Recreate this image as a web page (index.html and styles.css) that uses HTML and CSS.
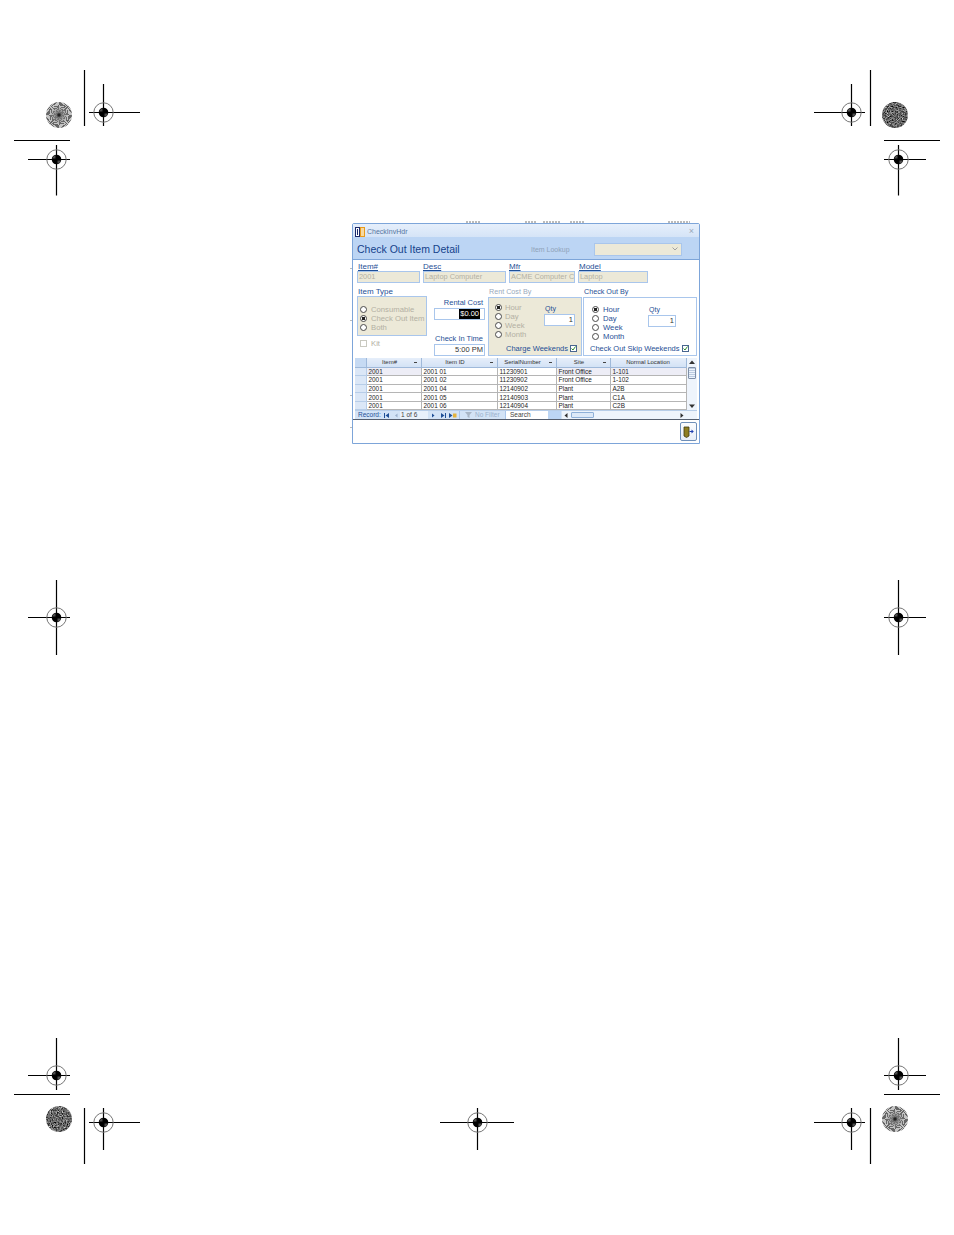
FILE: index.html
```html
<!DOCTYPE html>
<html lang="en">
<head>
<meta charset="utf-8">
<title>Check Out Item Detail</title>
<link rel="stylesheet" href="styles.css">
</head>
<body>
<main class="page">
  <svg class="marks" width="954" height="1235" viewBox="0 0 954 1235" aria-hidden="true">
    <defs>
      <g id="reg">
        <circle r="9.700" fill="none" stroke="#777" stroke-width="1"/>
        <circle r="4.800" fill="#000"/>
        <path d="M-1 -4.300A4.500 4.500 0 0 0 -4.300 -1H-1ZM1 1V4.300A4.500 4.500 0 0 0 4.300 1Z" fill="#fff" opacity="0.3"/>
      </g>
      <filter id="noise" x="0" y="0" width="100%" height="100%" color-interpolation-filters="sRGB">
        <feTurbulence type="fractalNoise" baseFrequency="0.8" numOctaves="2" seed="4"/>
        <feColorMatrix type="matrix" values="0.9 0.9 0 0 -0.5  0.9 0.9 0 0 -0.5  0.9 0.9 0 0 -0.5  0 0 0 0 1"/>
        <feComposite in2="SourceGraphic" operator="in"/>
      </filter>
    </defs>
    <g class="ink">
      <path d="M89 112.500H140M103.500 84V126M84.500 70V126M14 140.500H70M28 159.500H70M56.500 145V195.500"/>
      <path d="M814 112.500H865M851.500 84V126M870.500 70V126M884 140.500H940M884 159.500H926M898.500 145V195.500"/>
      <path d="M28 617.500H70M56.500 580V655M884 617.500H926M898.500 580V655"/>
      <path d="M28 1075.500H70M56.500 1038V1090M14 1094.500H70M89 1122.500H140M103.500 1108V1150M84.500 1108V1164"/>
      <path d="M884 1075.500H926M898.500 1038V1090M884 1094.500H940M814 1122.500H865M851.500 1108V1150M870.500 1108V1164"/>
      <path d="M440 1122.500H514M477.500 1108V1150"/>
    </g>
    <use href="#reg" x="103.500" y="112.500"/>
    <use href="#reg" x="56.500" y="159.500"/>
    <use href="#reg" x="851.500" y="112.500"/>
    <use href="#reg" x="898.500" y="159.500"/>
    <use href="#reg" x="56.500" y="617.500"/>
    <use href="#reg" x="898.500" y="617.500"/>
    <use href="#reg" x="56.500" y="1075.500"/>
    <use href="#reg" x="103.500" y="1122.500"/>
    <use href="#reg" x="898.500" y="1075.500"/>
    <use href="#reg" x="851.500" y="1122.500"/>
    <use href="#reg" x="477.500" y="1122.500"/>
    <circle cx="895" cy="115" r="13" fill="#666" filter="url(#noise)"/>
    <circle cx="59" cy="1119" r="13" fill="#666" filter="url(#noise)"/>
    <g class="specks">
      <path d="M466 222H480M525 222H537M543 222H560M570 222H585M668 222H690M351 268V269M351 320V321M351 395V396M351 427V428"/>
    </g>
  </svg>

  <div class="disc burst disc-tl"></div>
  <div class="disc burst disc-br"></div>

  <section class="window">
    <div class="titlebar">
      <svg class="app-icon" width="10" height="10" viewBox="0 0 10 10" aria-hidden="true">
        <rect x="0.500" y="0.500" width="4" height="9" fill="#fff" stroke="#1b2a6b"/>
        <rect x="2" y="2" width="1" height="6" fill="#1b2a6b"/>
        <rect x="5.500" y="0.500" width="4" height="9" fill="#f7d9a0" stroke="#e89a1c"/>
      </svg>
      <span class="title-text">CheckInvHdr</span>
      <span class="close">×</span>
    </div>
    <header class="band">
      <h1>Check Out Item Detail</h1>
      <span class="lookup-label">Item Lookup</span>
      <div class="lookup">
        <svg width="6" height="4" viewBox="0 0 6 4" aria-hidden="true"><path d="M0.500 0.500L3 3L5.500 0.500" fill="none" stroke="#a0a0a0"/></svg>
      </div>
    </header>

    <div class="body">
      <div class="fields">
        <div class="field f-item"><label>Item#</label><div class="input off">2001</div></div>
        <div class="field f-desc"><label>Desc</label><div class="input off">Laptop Computer</div></div>
        <div class="field f-mfr"><label>Mfr</label><div class="input off">ACME Computer C</div></div>
        <div class="field f-model"><label>Model</label><div class="input off">Laptop</div></div>
      </div>

      <div class="columns">
        <div class="col col-type">
          <div class="col-title">Item Type</div>
          <div class="box type-box">
            <div class="opt off-text"><i class="radio"></i>Consumable</div>
            <div class="opt off-text"><i class="radio on"></i>Check Out Item</div>
            <div class="opt off-text"><i class="radio"></i>Both</div>
          </div>
          <div class="kit off-text"><i class="check"></i>Kit</div>
        </div>

        <div class="col col-cost">
          <div class="cost-label">Rental Cost</div>
          <div class="input live right"><span class="selected">$0.00</span></div>
          <div class="cost-label second">Check In Time</div>
          <div class="input live right">5:00 PM</div>
        </div>

        <div class="col col-rent">
          <div class="col-title muted">Rent Cost By</div>
          <div class="box rent-box">
            <div class="by-row">
              <div class="opts">
                <div class="opt off-text"><i class="radio on"></i>Hour</div>
                <div class="opt off-text"><i class="radio"></i>Day</div>
                <div class="opt off-text"><i class="radio"></i>Week</div>
                <div class="opt off-text"><i class="radio"></i>Month</div>
              </div>
              <div class="qty"><div class="qty-label">Qty</div><div class="input live right">1</div></div>
            </div>
            <div class="weekend">Charge Weekends<i class="check ticked"><svg width="7" height="7" viewBox="0 0 7 7" aria-hidden="true"><path d="M1.500 3.500L3 5L5.500 1.500" fill="none" stroke="#2e8b2e"/></svg></i></div>
          </div>
        </div>

        <div class="col col-out">
          <div class="col-title">Check Out By</div>
          <div class="box out-box">
            <div class="by-row">
              <div class="opts">
                <div class="opt"><i class="radio on"></i>Hour</div>
                <div class="opt"><i class="radio"></i>Day</div>
                <div class="opt"><i class="radio"></i>Week</div>
                <div class="opt"><i class="radio"></i>Month</div>
              </div>
              <div class="qty"><div class="qty-label">Qty</div><div class="input live right">1</div></div>
            </div>
            <div class="weekend">Check Out Skip Weekends<i class="check ticked"><svg width="7" height="7" viewBox="0 0 7 7" aria-hidden="true"><path d="M1.500 3.500L3 5L5.500 1.500" fill="none" stroke="#2e8b2e"/></svg></i></div>
          </div>
        </div>
      </div>

      <div class="sheet">
        <div class="sheet-main">
          <table>
            <colgroup>
              <col class="c-sel"><col class="c-item"><col class="c-id"><col class="c-serial"><col class="c-site"><col class="c-loc">
            </colgroup>
            <thead>
              <tr><th class="corner"></th><th class="sorted">Item#<b></b></th><th class="sorted">Item ID<b></b></th><th class="sorted">SerialNumber<b></b></th><th class="sorted">Site<b></b></th><th>Normal Location</th></tr>
            </thead>
            <tbody>
              <tr class="current"><td class="sel"></td><td>2001</td><td class="plain">2001 01</td><td class="plain">11230901</td><td>Front Office</td><td>1-101</td></tr>
              <tr><td class="sel"></td><td>2001</td><td>2001 02</td><td>11230902</td><td>Front Office</td><td>1-102</td></tr>
              <tr><td class="sel"></td><td>2001</td><td>2001 04</td><td>12140902</td><td>Plant</td><td>A2B</td></tr>
              <tr><td class="sel"></td><td>2001</td><td>2001 05</td><td>12140903</td><td>Plant</td><td>C1A</td></tr>
              <tr><td class="sel"></td><td>2001</td><td>2001 06</td><td>12140904</td><td>Plant</td><td>C2B</td></tr>
            </tbody>
          </table>
          <div class="vscroll">
            <svg class="tri" width="6" height="8" viewBox="0 0 6 8" aria-hidden="true"><path d="M0 6L3 2.500L6 6Z" fill="#333"/></svg>
            <span class="vthumb"></span>
            <svg class="tri end" width="6" height="8" viewBox="0 0 6 8" aria-hidden="true"><path d="M0 2.500L3 6L6 2.500Z" fill="#333"/></svg>
          </div>
        </div>
        <div class="nav">
          <span class="rec">Record:</span>
          <svg class="nb n-first" width="11" height="7" viewBox="0 0 11 7" aria-hidden="true"><path d="M2 1H3V6H2ZM7 1V6L3.500 3.500Z" fill="#1f4f96"/></svg>
          <svg class="nb n-prev" width="7" height="7" viewBox="0 0 7 7" aria-hidden="true"><path d="M4.500 1.500V5.500L2 3.500Z" fill="#9ab0cc"/></svg>
          <span class="nav-count">1 of 6</span>
          <svg class="nb n-next" width="10" height="7" viewBox="0 0 10 7" aria-hidden="true"><path d="M4 1.500V5.500L6.500 3.500Z" fill="#1f4f96"/></svg>
          <svg class="nb n-last" width="10" height="7" viewBox="0 0 10 7" aria-hidden="true"><path d="M3 1V6L6.500 3.500ZM7 1H8V6H7Z" fill="#1f4f96"/></svg>
          <svg class="nb n-new" width="9" height="7" viewBox="0 0 9 7" aria-hidden="true"><path d="M1 1V6L4.500 3.500Z" fill="#1f4f96"/><path d="M5 1.500H8.500V5.500H5Z" fill="#e3b23c"/></svg>
          <span class="no-filter">
            <svg width="9" height="8" viewBox="0 0 9 8" aria-hidden="true"><path d="M1 1H8L5.500 4V7L3.500 6V4Z" fill="#a9b6c6"/></svg>
            No Filter
          </span>
          <span class="search">Search</span>
          <span class="search-end"></span>
          <span class="hscroll">
            <svg width="8" height="7" viewBox="0 0 8 7" aria-hidden="true"><path d="M5.500 1V6L2.500 3.500Z" fill="#333"/></svg>
            <span class="hthumb"></span>
            <svg class="right-arrow" width="8" height="7" viewBox="0 0 8 7" aria-hidden="true"><path d="M2.500 1V6L5.500 3.500Z" fill="#333"/></svg>
          </span>
        </div>
      </div>

      <div class="foot">
        <button class="exit" type="button" aria-label="Exit">
          <svg width="11" height="12" viewBox="0 0 11 12" aria-hidden="true">
            <path d="M1 1H6V10L3.500 11.500L1 10Z" fill="#8f7f22" stroke="#3f3a10" stroke-width="0.8"/>
            <path d="M6.500 5H8.500V3.500L10.800 5.500L8.500 7.500V6H6.500Z" fill="#1f3fb0"/>
          </svg>
        </button>
      </div>
    </div>
  </section>
</main>
</body>
</html>
```
FILE: styles.css
```css
* { box-sizing: border-box; }
html, body { margin: 0; padding: 0; background: #fff; }
.page {
  position: relative;
  width: 954px;
  height: 1235px;
  overflow: hidden;
  font-family: "Liberation Sans", Arial, sans-serif;
  font-size: 7px;
  color: #1f4f96;
}

/* printer's marks on the free canvas */
.marks { position: absolute; left: 0; top: 0; }
.ink path { stroke: #000; stroke-width: 1.2; fill: none; }
.specks path { stroke: #777; stroke-width: 1; fill: none; stroke-dasharray: 2 1; }

.disc {
  position: absolute;
  width: 26px;
  height: 26px;
  border-radius: 50%;
}
.burst {
  background:
    radial-gradient(circle, #222 0 1px, rgba(110,110,110,.9) 2.500px, rgba(130,130,130,.55) 5px, rgba(130,130,130,0) 9px),
    repeating-conic-gradient(#666 0 3deg, #c4c4c4 3deg 6deg);
}
.disc-tl { left: 46px; top: 102px; }
.disc-br { left: 882px; top: 1106px; }

/* application window */
.window {
  position: absolute;
  left: 352px;
  top: 223px;
  width: 348px;
  height: 221px;
  border: 1px solid #7da5d9;
  border-radius: 2px 2px 0 0;
  background: #fff;
  display: flex;
  flex-direction: column;
}
.titlebar {
  height: 13px;
  display: flex;
  align-items: center;
  padding: 2px 5px 0 2px;
  background: linear-gradient(#e6effb, #d5e4f7);
}
.app-icon { flex: none; }
.title-text { margin-left: 2px; font-size: 7px; color: #54749f; flex: 1; }
.close { color: #9aa8ba; font-size: 9px; line-height: 9px; }

.band {
  height: 23px;
  display: flex;
  align-items: center;
  padding: 2px 0 0 4px;
  background: #bcd5f4;
  border-bottom: 1px solid #7da5d9;
}
h1 {
  margin: 0;
  width: 174px;
  font-size: 10.500px;
  font-weight: 400;
  color: #15428b;
}
.lookup-label { width: 63px; color: #8fa2b8; font-size: 7px; }
.lookup {
  width: 88px;
  height: 13px;
  background: #ece9d8;
  border: 1px solid #a9c6ec;
  display: flex;
  align-items: center;
  justify-content: flex-end;
  padding-right: 3px;
}

.body { flex: 1; display: flex; flex-direction: column; min-height: 0; }

.fields { display: flex; gap: 3px; padding: 3px 0 0 4px; }
.field label { display: block; height: 8px; line-height: 8px; font-size: 8px; color: #1f4f96; text-decoration: underline; text-decoration-thickness: 0.5px; }
.f-item label, .f-model label { padding-left: 1px; }
.f-item { width: 63px; }
.f-desc { width: 83px; }
.f-mfr { width: 66px; }
.f-model { width: 70px; }

.input {
  height: 12px;
  line-height: 10px;
  padding: 0 1px;
  font-size: 7.500px;
  white-space: nowrap;
  overflow: hidden;
  border: 1px solid #a9c6ec;
}
.input.off { background: #ece9d8; color: #b3b0a3; font-size: 7.400px; }
.input.live { background: #fff; color: #333; }
.right { text-align: right; }
.selected { display: inline-block; height: 10px; margin-right: 3px; background: #000; color: #fff; padding: 0 1px; }

.columns { display: flex; margin: 5px 0 0 4px; height: 68px; }
.col { flex: none; }
.col-type { width: 70px; margin-right: 7px; }
.col-cost { width: 51px; margin-right: 3px; padding-top: 11px; }
.col-rent { width: 94px; margin-right: 1px; }
.col-out { width: 114px; }

.col-title { height: 8px; line-height: 8px; font-size: 7.200px; color: #1f4f96; margin-bottom: 1px; padding-left: 1px; }
.col-type .col-title { margin-bottom: 0; font-size: 8px; }
.col-title.muted { color: #9aa9bb; }

.box { border: 1px solid #a9c6ec; }
.type-box { height: 40px; background: #ece9d8; padding: 8px 0 0 2px; }
.rent-box { height: 59px; background: #ece9d8; padding: 5px 0 0 6px; }
.out-box { height: 59px; background: #fff; padding: 7px 0 0 8px; }

.opt {
  display: flex;
  align-items: center;
  height: 9px;
  font-size: 7.700px;
  color: #1f4f96;
  white-space: nowrap;
}
.opt.off-text, .off-text { color: #b3b0a3; }
.radio {
  flex: none;
  width: 7px;
  height: 7px;
  margin-right: 4px;
  border-radius: 50%;
  border: 1px solid #4a4a4a;
  background: #fff;
}
.radio.on { background: radial-gradient(circle, #222 0 1.500px, #fff 2px); }
.rent-box .radio { margin-right: 3px; }

.kit { display: flex; align-items: center; margin: 3px 0 0 3px; height: 8px; font-size: 7.700px; }
.check {
  flex: none;
  display: block;
  width: 7px;
  height: 7px;
  margin-right: 4px;
  border: 1px solid #c9c9c0;
  background: #fff;
  overflow: hidden;
}
.check svg { display: block; margin: -1px; }
.check.ticked { margin: 0 0 0 2px; border-color: #49668f; }

.cost-label { height: 8px; line-height: 8px; margin-bottom: 1px; padding-right: 2px; text-align: right; font-size: 7.500px; color: #1f4f96; }
.cost-label.second { margin-top: 15px; }

.by-row { display: flex; }
.opts { flex: none; }
.rent-box .opts { width: 49px; }
.out-box .opts { width: 56px; }
.rent-box .qty { width: 31px; padding-top: 1px; }
.out-box .qty { width: 28px; }
.qty-label { height: 9px; line-height: 9px; margin-bottom: 1px; font-size: 7px; color: #1f4f96; padding-left: 1px; }
.qty .input { height: 12px; }

.weekend {
  display: flex;
  align-items: center;
  height: 9px;
  font-size: 7.500px;
  color: #1f4f96;
  white-space: nowrap;
}
.rent-box .weekend { margin: 5px 0 0 11px; }
.out-box .weekend { margin: 3px 0 0 -2px; }

/* datasheet */
.sheet { margin: 2px 0 0 2px; width: 342px; height: 61px; display: flex; flex-direction: column; }
.sheet-main { display: flex; height: 52px; background: #fff; }
table {
  flex: none;
  width: 331px;
  table-layout: fixed;
  border-collapse: collapse;
  font-size: 6.400px;
  color: #222;
}
.c-sel { width: 11px; }
.c-item { width: 55px; }
.c-id { width: 76px; }
.c-serial { width: 59px; }
.c-site { width: 54px; }
.c-loc { width: 76px; }
th {
  position: relative;
  height: 9px;
  padding: 1px 0 0;
  font-size: 6px;
  font-weight: 400;
  text-align: center;
  line-height: 7px;
  color: #333;
  background: linear-gradient(#e6eefa, #d3e2f5);
  border-right: 1px solid #9fb9da;
  border-bottom: 1px solid #9fb9da;
}
th.sorted { padding-right: 8px; }
th b { position: absolute; right: 4px; top: 4px; width: 3px; height: 1px; background: #444; }
th.corner { background: #c6daf3; }
td {
  height: 8.600px;
  padding: 0 0 0 2px;
  line-height: 7px;
  white-space: nowrap;
  overflow: hidden;
  border-right: 1px solid #b5b5b5;
  border-bottom: 1px solid #b5b5b5;
}
td.sel { background: #dbe7f7; border-right: 1px solid #b7cde8; border-bottom: 1px solid #b7cde8; padding: 0; }
tr.current td { background: #ededf6; }
tr.current td.sel { background: #dbe7f7; }
tr.current td.plain { background: #fff; }

.vscroll {
  flex: 1;
  display: flex;
  flex-direction: column;
  align-items: center;
  background: #eef4fc;
}
.tri { flex: none; display: block; }
.tri.end { margin-top: auto; }
.vthumb { width: 8px; height: 12px; border: 1px solid #7f8fa8; background: repeating-linear-gradient(#bccbe0 0 1px, #eef4fc 1px 2px); border-radius: 1px; margin-top: 1px; }

.nav {
  height: 9px;
  display: flex;
  align-items: center;
  background: #d3e3f6;
  border-top: 1px solid #b7cde8;
  font-size: 6.500px;
  line-height: 8px;
  color: #1f4f96;
  white-space: nowrap;
}
.rec { width: 27px; padding-left: 3px; }
.nb { flex: none; display: block; }
.nav-count { width: 28px; height: 9px; padding-left: 1px; background: #e9f1fb; color: #444; }
.no-filter { display: flex; align-items: center; width: 46px; padding-left: 4px; color: #9ab0cc; margin-left: 2px; gap: 2px; border-left: 1px solid #a9c6ec; }
.search { width: 43px; height: 9px; padding-left: 4px; background: #fff; color: #444; border-left: 1px solid #a9c6ec; }
.search-end { width: 13px; height: 9px; background: #bcd5f4; margin-right: 1px; }
.hscroll { flex: 1; height: 9px; display: flex; align-items: center; background: #eef4fc; padding: 0 11px 0 0; }
.hscroll svg { flex: none; }
.hthumb { width: 23px; height: 6px; margin-left: 1px; border: 1px solid #8fb0d8; border-radius: 1px; background: #dde9f8; }
.right-arrow { margin-left: auto; }

.foot {
  flex: 1;
  display: flex;
  justify-content: flex-end;
  align-items: flex-start;
  border-top: 1px solid #555e6e;
  padding: 2px 2px 0 0;
}
.exit {
  width: 17px;
  height: 19px;
  padding: 0;
  display: flex;
  align-items: center;
  justify-content: center;
  background: linear-gradient(#fbfcfe, #e8eff8);
  border: 1px solid #6f8fb8;
  border-radius: 2px;
}
```
